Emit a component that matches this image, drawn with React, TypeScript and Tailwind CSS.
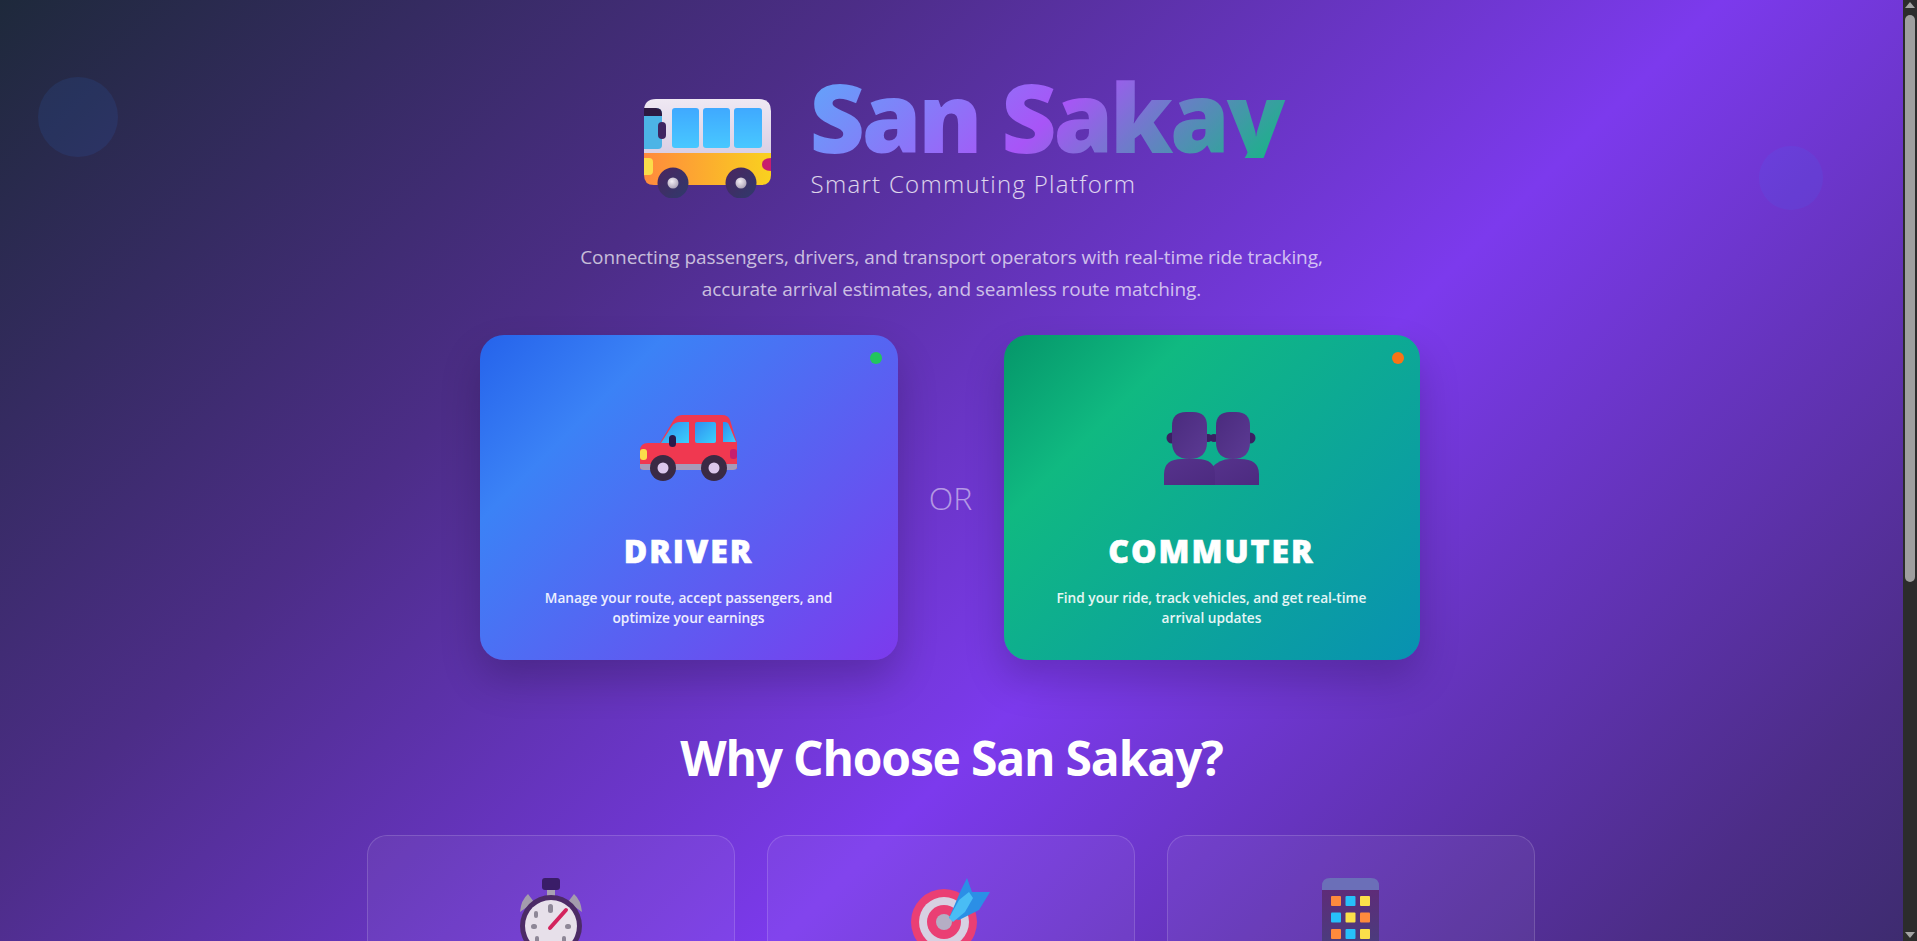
const sans = "font-['Open_Sans','Noto_Sans',sans-serif]";

function BusIcon() {
  return (
    <svg width="127" height="99" viewBox="0 0 127 99">
      <defs>
        <linearGradient id="busBody" x1="0" x2="1" y1="0" y2="0">
          <stop offset="0" stopColor="#ff8a3d" />
          <stop offset="1" stopColor="#f9d11f" />
        </linearGradient>
        <linearGradient id="busWin" x1="0" x2="0" y1="0" y2="1">
          <stop offset="0" stopColor="#3fa9ff" />
          <stop offset="1" stopColor="#48c8ff" />
        </linearGradient>
        <linearGradient id="busRoof" x1="0" x2="0" y1="0" y2="1">
          <stop offset="0" stopColor="#efe8f3" />
          <stop offset="1" stopColor="#d9cfe4" />
        </linearGradient>
        <linearGradient id="busWheel" x1="0" x2="1" y1="0" y2="1">
          <stop offset="0" stopColor="#4a2560" />
          <stop offset="1" stopColor="#2f3a6c" />
        </linearGradient>
        <radialGradient id="busHub" cx="0.4" cy="0.35" r="0.7">
          <stop offset="0" stopColor="#f4eff5" />
          <stop offset="1" stopColor="#a99fb5" />
        </radialGradient>
      </defs>
      <path d="M0 56V12Q0 0 12 0H115Q127 0 127 12V56Z" fill="url(#busRoof)" />
      <path d="M0 54H127V76Q127 86 117 86H10Q0 86 0 76Z" fill="url(#busBody)" />
      <path d="M0 9H12Q18 9 18 15V46Q18 50 14 50H0Z" fill="#4cb4e6" />
      <path d="M0 9H12Q18 9 18 15V17H0Z" fill="#2d1a42" />
      <rect x="14" y="23" width="8" height="17" rx="4" fill="#3f2560" />
      <rect x="28" y="9" width="27" height="40" rx="3" fill="url(#busWin)" />
      <rect x="59" y="9" width="27" height="40" rx="3" fill="url(#busWin)" />
      <rect x="90" y="9" width="28" height="40" rx="3" fill="url(#busWin)" />
      <path d="M0 59H5Q9 59 9 63V72Q9 76 5 76H0Z" fill="#fbdc4a" />
      <path d="M127 59Q118 59 118 65.500Q118 72 127 72Z" fill="#c81e6e" />
      <circle cx="29" cy="84" r="15.500" fill="url(#busWheel)" />
      <circle cx="29" cy="84" r="5.500" fill="url(#busHub)" />
      <circle cx="97" cy="84" r="15.500" fill="url(#busWheel)" />
      <circle cx="97" cy="84" r="5.500" fill="url(#busHub)" />
    </svg>
  );
}

function CarIcon() {
  return (
    <svg width="98" height="66" viewBox="0 0 98 66">
      <defs>
        <linearGradient id="carGlass" x1="0" x2="1" y1="0" y2="1">
          <stop offset="0" stopColor="#2f8ff0" />
          <stop offset="1" stopColor="#3cd0fc" />
        </linearGradient>
      </defs>
      <path d="M20 28L33 6Q36 0 42 0H82Q88 0 90 5L97 28V54H0V36Q0 28 8 28Z" fill="#f03850" />
      <path d="M21 28L32 11Q35 7 40 7H49V28Z" fill="url(#carGlass)" />
      <rect x="55" y="7" width="21" height="21" rx="2" fill="url(#carGlass)" />
      <path d="M83 7H85Q88 7 89 10L96 27H83Z" fill="url(#carGlass)" />
      <rect x="29" y="20" width="7" height="12" rx="3.500" fill="#2a1a4a" />
      <rect x="0" y="34" width="7" height="11" rx="3" fill="#fbdc4a" />
      <rect x="90" y="34" width="7" height="10" rx="3" fill="#c81e6e" />
      <path d="M0 49H97V52Q97 55 93 55H4Q0 55 0 52Z" fill="#a79ab8" />
      <circle cx="23" cy="53" r="13" fill="#3a2a44" />
      <circle cx="23" cy="53" r="5.500" fill="#dcc8ec" />
      <circle cx="74" cy="53" r="13" fill="#3a2a44" />
      <circle cx="74" cy="53" r="5.500" fill="#dcc8ec" />
    </svg>
  );
}

function PeopleIcon() {
  return (
    <svg width="96" height="73" viewBox="0 0 96 73">
      <defs>
        <linearGradient id="headFill" x1="0" x2="1" y1="0" y2="1">
          <stop offset="0" stopColor="#4a2b7d" />
          <stop offset="1" stopColor="#5c3a94" />
        </linearGradient>
        <linearGradient id="bodyFill" x1="0" x2="1" y1="0" y2="1">
          <stop offset="0" stopColor="#56338c" />
          <stop offset="1" stopColor="#4c2a80" />
        </linearGradient>
      </defs>
      <circle cx="50" cy="26" r="4" fill="#3c1f63" />
      <circle cx="86" cy="26" r="5.500" fill="#3c1f63" />
      <path d="M52 14Q52 0 66 0H72Q86 0 86 14V30Q86 47 69 47Q52 47 52 30Z" fill="url(#headFill)" />
      <path d="M47 73V56Q56 47 66 47H76Q95 47 95 62V73Z" fill="url(#bodyFill)" />
      <circle cx="8" cy="26" r="5.500" fill="#3c1f63" />
      <circle cx="44" cy="26" r="4" fill="#3c1f63" />
      <path d="M8 14Q8 0 22 0H29Q43 0 43 14V30Q43 47 25.500 47Q8 47 8 30Z" fill="url(#headFill)" />
      <path d="M0 73V62Q0 47 18 47H33Q51 47 51 62V73Z" fill="url(#bodyFill)" />
    </svg>
  );
}

function StopwatchIcon() {
  return (
    <svg width="64" height="80" viewBox="0 0 64 80">
      <rect x="23" y="0" width="18" height="12" rx="3" fill="#3a1d68" />
      <rect x="28" y="12" width="8" height="7" fill="#a9a1b3" />
      <path d="M1 34Q2 22 9 16L15 24Z M63 34Q62 22 55 16L49 24Z" fill="#a49cad" />
      <circle cx="32" cy="48" r="31" fill="#4c2b66" />
      <circle cx="32" cy="48" r="26" fill="#e7e0ea" />
      <path d="M31 50L47 32" stroke="#d3235d" strokeWidth="4" strokeLinecap="round" />
      <rect x="29" y="26" width="5" height="9" rx="2.500" fill="#8e8797" />
      <rect x="15" y="33" width="4" height="7" rx="2" fill="#8e8797" />
      <rect x="12" y="46" width="6" height="5" rx="2.500" fill="#8e8797" />
      <rect x="46" y="46" width="6" height="5" rx="2.500" fill="#8e8797" />
      <rect x="16" y="58" width="4" height="7" rx="2" fill="#8e8797" />
      <rect x="43" y="58" width="4" height="7" rx="2" fill="#8e8797" />
      <rect x="30" y="63" width="4" height="7" rx="2" fill="#8e8797" />
    </svg>
  );
}

function TargetIcon() {
  return (
    <svg width="79" height="80" viewBox="0 0 79 80">
      <circle cx="33" cy="44" r="33" fill="#ea3f74" />
      <circle cx="33" cy="44" r="25" fill="#d7d0e2" />
      <circle cx="33" cy="44" r="17" fill="#ea3f74" />
      <circle cx="33" cy="44" r="8" fill="#b5aec4" />
      <path d="M38 40L50 12L56 0L61 14L79 14L68 32L48 42Z" fill="#2b8fe6" />
      <path d="M38 40L48 22L58 14L62 20L54 34L42 44Z" fill="#49bdf5" />
    </svg>
  );
}

function BuildingIcon() {
  const rows = [
    ['#ff8a3d', '#27c0fa', '#fbe04a'],
    ['#27c0fa', '#fbe04a', '#ff8a3d'],
    ['#ff8a3d', '#27c0fa', '#fbe04a'],
  ];
  return (
    <svg width="57" height="80" viewBox="0 0 57 80">
      <defs>
        <linearGradient id="towerFill" x1="0" x2="0" y1="0" y2="1">
          <stop offset="0" stopColor="#5f2b78" />
          <stop offset="1" stopColor="#45407f" />
        </linearGradient>
      </defs>
      <rect x="0" y="10" width="57" height="70" fill="url(#towerFill)" />
      <path d="M0 12V8Q0 0 8 0H49Q57 0 57 8V12Z" fill="#6b6fb8" />
      {rows.map((row, r) =>
        row.map((c, i) => <rect key={`${r}-${i}`} x={9 + i * 14.5} y={18 + r * 16.5} width={10} height={10} rx={1} fill={c} />),
      )}
    </svg>
  );
}

function RoleCard({ width, gradient, dot, icon, title, text }: { width: string; gradient: string; dot: string; icon: React.ReactNode; title: string; text: string }) {
  return (
    <div className={`relative flex h-[325px] flex-col items-center rounded-[24px] pt-[78px] shadow-[0_20px_40px_rgba(0,0,0,0.2)] ${width} ${gradient}`}>
      <span className="absolute top-[17px] right-[16px] h-3 w-3 rounded-full" style={{ background: dot }} />
      <div className="flex h-[70px] items-center justify-center">{icon}</div>
      <h2 className="mt-[46px] text-[32px] leading-[44px] font-extrabold tracking-[2px] text-white [-webkit-text-stroke:0.6px_white]">{title}</h2>
      <p className="mt-[15px] w-[330px] text-center text-[13.7px] leading-[20px] font-semibold text-white/90">{text}</p>
    </div>
  );
}

function Feature({ icon }: { icon: React.ReactNode }) {
  return (
    <div className="flex h-[200px] w-[368px] justify-center rounded-[20px] border border-white/15 bg-white/5 pt-[42px]">
      {icon}
    </div>
  );
}

export default function App() {
  return (
    <div className={`flex h-screen overflow-hidden ${sans}`}>
      <main className="relative min-w-0 flex-1 overflow-hidden bg-[linear-gradient(135deg,#1e293b_0%,#4c2d87_25%,#7c3aed_50%,#4c2d87_75%,#1e293b_100%)] bg-[length:100%_1540px] bg-no-repeat">
        <span className="absolute top-[77px] left-[38px] h-20 w-20 rounded-full bg-blue-500/10" />
        <span className="absolute top-[146px] left-[1759px] h-[64px] w-[64px] rounded-full bg-blue-500/10" />

        <header className="flex justify-center pt-[74px]">
          <div className="flex items-start gap-[39px]">
            <div className="mt-[25px]"><BusIcon /></div>
            <div className="w-[450px]">
              <h1 className="w-[480px] bg-[linear-gradient(135deg,#60a5fa_0%,#a855f7_50%,#10b981_100%)] bg-clip-text text-[96px] leading-[84px] font-extrabold tracking-[-3.2px] whitespace-nowrap text-transparent">San Sakay</h1>
              <p className="mt-[10px] ml-[1px] text-[24px] leading-[32px] font-light tracking-[1.3px] whitespace-nowrap text-white/80">Smart Commuting Platform</p>
            </div>
          </div>
        </header>

        <p className="mt-[41px] text-center text-[19px] leading-[32px] font-normal tracking-[-0.07px] text-white/70">
          Connecting passengers, drivers, and transport operators with real-time ride tracking,<br />
          accurate arrival estimates, and seamless route matching.
        </p>

        <section className="mt-[30px] flex items-center justify-center pr-[4px]">
          <RoleCard
            width="w-[418px]"
            gradient="bg-[linear-gradient(135deg,#2563eb_0%,#3b82f6_25%,#7c3aed_100%)]"
            dot="#22c55e"
            icon={<CarIcon />}
            title="DRIVER"
            text="Manage your route, accept passengers, and optimize your earnings"
          />
          <span className="w-[106px] text-center text-[32px] font-light text-white/50">OR</span>
          <RoleCard
            width="w-[416px]"
            gradient="bg-[linear-gradient(135deg,#059669_0%,#10b981_25%,#0891b2_100%)]"
            dot="#f97316"
            icon={<PeopleIcon />}
            title="COMMUTER"
            text="Find your ride, track vehicles, and get real-time arrival updates"
          />
        </section>

        <h2 className="mt-[65px] text-center text-[48px] leading-[66px] font-bold tracking-[-1.2px] text-white">Why Choose San Sakay?</h2>

        <section className="mt-[44px] flex justify-center gap-[32px] pr-[2px]">
          <Feature icon={<StopwatchIcon />} />
          <Feature icon={<TargetIcon />} />
          <Feature icon={<BuildingIcon />} />
        </section>
      </main>

      {/* scrollbar */}
      <div className="flex w-[14px] shrink-0 flex-col items-center bg-[#2c2c2c]">
        <span className="mt-[2px] h-0 w-0 border-x-[5px] border-b-[6px] border-x-transparent border-b-[#a3a3a3]" />
        <span className="mt-[7px] h-[567px] w-[10px] rounded-full bg-[#9f9f9f]" />
        <span className="mt-auto mb-[3px] h-0 w-0 border-x-[5px] border-t-[6px] border-x-transparent border-t-[#a3a3a3]" />
      </div>
    </div>
  );
}
